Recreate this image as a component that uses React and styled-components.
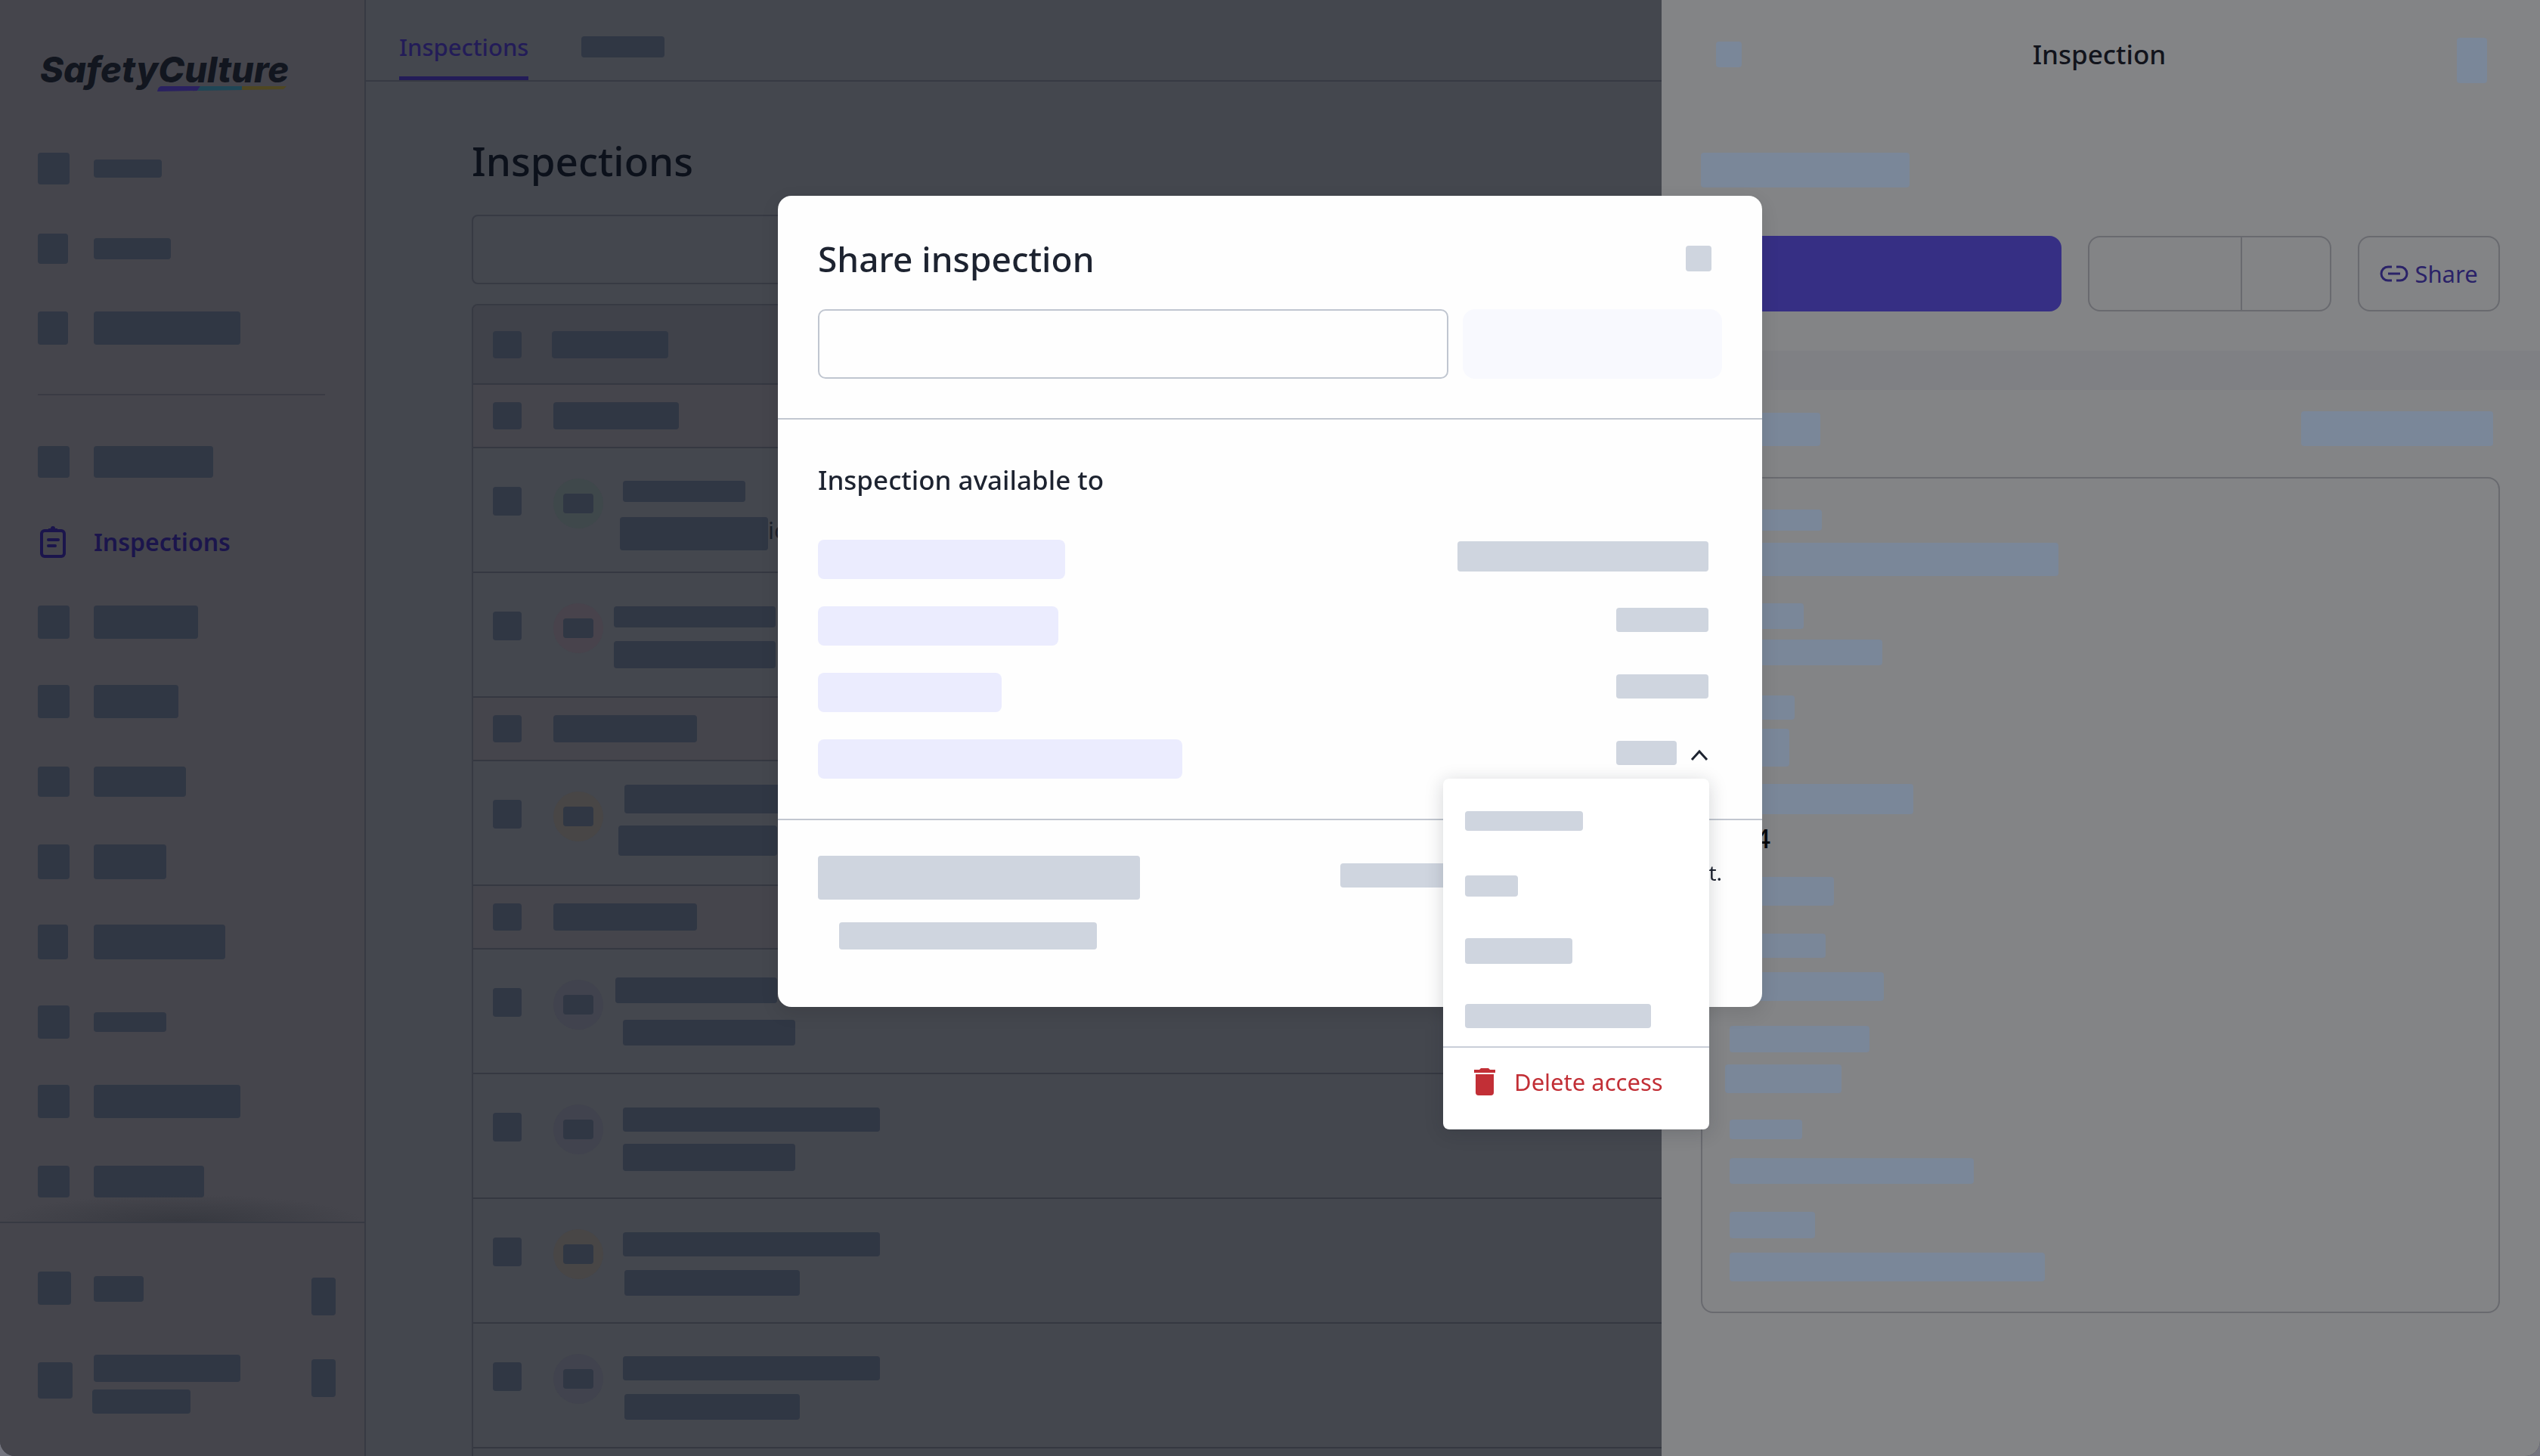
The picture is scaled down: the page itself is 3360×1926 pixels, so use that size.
import React, { useState } from 'react';
import styled, { createGlobalStyle } from 'styled-components';

const GlobalStyle = createGlobalStyle`
  * {
    box-sizing: border-box;
  }

  body {
    margin: 0;
    background: #74757f;
    font-family: 'Noto Sans', sans-serif;
    color: #1d2330;
  }

  h1, h2, h3, p, ul {
    margin: 0;
    padding: 0;
    font-weight: 500;
  }

  ul {
    list-style: none;
  }

  button, input {
    font: inherit;
    color: inherit;
    background: none;
    border: 0;
    padding: 0;
  }
`;

const Page = styled.div`
  display: grid;
  grid-template-columns: 484px 1fr 1162px;
  height: 100vh;
  overflow: hidden;
  border-radius: 0 0 20px 20px;
  background: #44474e;
`;

const Block = styled.span`
  display: block;
  flex: none;
  width: ${props => props.w}px;
  height: ${props => props.h}px;
  margin-top: ${props => props.top || 0}px;
  margin-left: ${props => props.left || 0}px;
  border-radius: 4px;
  background: #cfd5df;
`;

const DimBlock = styled(Block)`
  background: #303744;
`;

const DrawerBlock = styled(Block)`
  background: #7a8799;
`;

/* Sidebar */
const Sidebar = styled.aside`
  display: flex;
  flex-direction: column;
  min-height: 0;
  background: #45454c;
  border-right: 2px solid #373a43;
`;

const LogoLink = styled.a`
  display: block;
  height: 170px;
  padding: 66px 0 0 52px;
`;

const LogoSvg = styled.svg`
  display: block;
  overflow: visible;
`;

const Nav = styled.nav`
  display: flex;
  flex: 1;
  flex-direction: column;
`;

const NavItem = styled.a`
  display: grid;
  flex: 1;
  grid-template-columns: 42px 1fr;
  column-gap: 32px;
  align-items: center;
  padding-left: 50px;
  color: #1b154c;
  font-size: 32px;
  line-height: 44px;
  font-weight: 600;
  text-decoration: none;
`;

const NavDivider = styled.div`
  height: 2px;
  margin: 34px 52px 35px 50px;
  background: #3a3b44;
`;

const NavShade = styled.div`
  height: 36px;
  margin-top: -36px;
  background: radial-gradient(ellipse 50% 100% at 50% 100%, #373940, transparent);
`;

const SidebarFooter = styled.div`
  display: flex;
  flex-direction: column;
  gap: 52px;
  height: 310px;
  padding: 64px 38px 0 50px;
  border-top: 2px solid #373a43;
`;

const AccountRow = styled.div`
  display: grid;
  grid-template-columns: 46px 1fr 32px;
  column-gap: 28px;
  align-items: start;
`;

const AccountLines = styled.div`
  display: flex;
  flex-direction: column;
  gap: 10px;
`;

/* Main */
const Main = styled.main`
  display: flex;
  flex-direction: column;
  min-width: 0;
  overflow: hidden;
`;

const Tabs = styled.div`
  display: flex;
  flex: none;
  gap: 70px;
  height: 108px;
  padding-left: 44px;
  border-bottom: 2px solid #373a43;
`;

const Tab = styled.a`
  height: 106px;
  padding-top: 40px;
  color: #231c58;
  font-size: 31px;
  line-height: 44px;
  font-weight: 500;
  text-decoration: none;
  border-bottom: 5px solid #231c58;
`;

const MainBody = styled.div`
  display: flex;
  flex-direction: column;
  padding: 66px 0 0 140px;
`;

const MainTitle = styled.h1`
  margin-bottom: 32px;
  color: #0c111b;
  font-size: 53px;
  line-height: 78px;
`;

const SearchBox = styled.input`
  width: calc(100% + 20px);
  height: 92px;
  margin-bottom: 26px;
  border: 2px solid #373a43;
  border-radius: 8px;
`;

const List = styled.div`
  width: calc(100% + 20px);
  border: 2px solid #373a43;
  border-radius: 8px;
  overflow: hidden;
`;

const ListHeader = styled.div`
  display: flex;
  gap: 40px;
  height: 105px;
  padding: 34px 0 0 26px;
  background: #40424a;
  border-bottom: 2px solid #353841;
`;

const ListGroup = styled.div`
  display: flex;
  gap: 42px;
  align-items: center;
  height: 84px;
  padding-left: 26px;
  background: #45454c;
  border-bottom: 2px solid #353841;
`;

const ListRow = styled.div`
  display: flex;
  height: 165px;
  padding: 40px 0 0 26px;
  border-bottom: 2px solid #353841;
`;

const Avatar = styled.div`
  display: grid;
  place-items: center;
  flex: none;
  width: 66px;
  height: 66px;
  margin-left: 42px;
  border-radius: 50%;
  background: ${props => props.color};
`;

const RowText = styled.div`
  display: flex;
  flex-direction: column;
  margin-left: 14px;
  margin-top: ${props => props.lift}px;
`;

const RowLine = styled.div`
  display: flex;
  align-items: flex-end;
  color: #1b202b;
  font-size: 31px;
  line-height: 54px;
`;

/* Drawer */
const Drawer = styled.section`
  display: flex;
  flex-direction: column;
  background: #838486;
`;

const DrawerHeader = styled.header`
  display: flex;
  justify-content: space-between;
  height: 202px;
  padding: 48px 70px 0 72px;
`;

const DrawerTitle = styled.h2`
  color: #12141c;
  font-size: 35px;
  line-height: 48px;
`;

const DrawerActions = styled.div`
  display: flex;
  gap: 35px;
  padding: 64px 53px 52px 52px;
`;

const PrimaryButton = styled.button`
  flex: 1;
  height: 100px;
  border-radius: 16px;
  background: #362f84;
`;

const SplitButton = styled.div`
  display: grid;
  grid-template-columns: 200px 1fr;
  width: 322px;
  height: 100px;
  border: 2px solid #696a6f;
  border-radius: 16px;
`;

const SplitPart = styled.button`
  & + & {
    border-left: 2px solid #696a6f;
  }
`;

const ShareButton = styled.button`
  display: flex;
  gap: 8px;
  align-items: center;
  justify-content: center;
  width: 188px;
  height: 100px;
  border: 2px solid #696a6f;
  border-radius: 16px;
  color: #2a2268;
  font-size: 31px;
  line-height: 44px;
`;

const DrawerBand = styled.div`
  height: 52px;
  background: #7f8084;
`;

const DrawerSummary = styled.div`
  display: flex;
  justify-content: space-between;
  height: 115px;
  padding: 28px 62px 0 52px;
`;

const DrawerCard = styled.div`
  height: 1106px;
  margin: 0 53px 0 52px;
  padding: 41px 36px;
  border: 2px solid #696a6f;
  border-radius: 16px;
`;

const FieldValue = styled.p`
  width: 54px;
  margin: 7px 0 26px;
  color: #06070b;
  font-size: 35px;
  line-height: 50px;
  text-align: right;
`;

/* Share dialog */
const Overlay = styled.div`
  position: fixed;
  inset: 0;
  display: flex;
  justify-content: center;
  align-items: flex-start;
  padding-top: 259px;
`;

const Dialog = styled.div`
  width: 1302px;
  border-radius: 18px;
  background: #fefefe;
  box-shadow: 0 8px 24px rgba(0, 0, 0, 0.1);
`;

const DialogTop = styled.div`
  padding: 50px 53px 52px;
  border-bottom: 2px solid #c2c7d0;
`;

const TitleRow = styled.div`
  display: flex;
  justify-content: space-between;
  padding-right: 14px;
  margin-bottom: 34px;
`;

const DialogTitle = styled.h2`
  font-size: 46px;
  line-height: 66px;
`;

const CloseButton = styled.button`
  align-self: center;
`;

const InviteRow = styled.div`
  display: flex;
  gap: 19px;
`;

const InviteInput = styled.input`
  flex: 1;
  height: 92px;
  padding: 0 24px;
  font-size: 31px;
  border: 2px solid #c0c6d0;
  border-radius: 10px;
`;

const InviteButton = styled.button`
  width: 343px;
  height: 92px;
  border-radius: 16px;
  background: #f8f9fe;
`;

const AccessSection = styled.div`
  padding: 55px 53px 53px;
  border-bottom: 2px solid #c2c7d0;
`;

const SectionTitle = styled.h3`
  margin-bottom: 54px;
  font-size: 35px;
  line-height: 50px;
`;

const AccessList = styled.ul`
  display: grid;
  gap: 36px;
`;

const AccessItem = styled.li`
  position: relative;
  display: flex;
  justify-content: space-between;
  height: 52px;
  padding-right: 18px;
`;

const Person = styled(Block)`
  border-radius: 8px;
  background: #ebecfe;
`;

const LevelButton = styled.button`
  display: flex;
  gap: 18px;
  align-items: flex-start;
  padding-top: 2px;
`;

const Menu = styled.div`
  position: absolute;
  top: 52px;
  right: 17px;
  z-index: 1;
  width: 352px;
  height: 464px;
  border-radius: 8px;
  background: #fff;
  box-shadow: 0 4px 24px rgba(20, 26, 40, 0.18);
`;

const MenuOptions = styled.div`
  height: 356px;
  padding: 13px 29px 0;
  overflow: hidden;
  border-bottom: 2px solid #c9ced8;
`;

const MenuOption = styled.button`
  display: block;
  height: 86px;
`;

const DeleteButton = styled.button`
  display: flex;
  gap: 24px;
  align-items: center;
  width: 100%;
  height: 90px;
  padding-left: 40px;
  color: #c22f36;
  font-size: 31px;
  line-height: 44px;
  font-weight: 400;
`;

const DialogFooter = styled.div`
  display: flex;
  justify-content: space-between;
  height: 247px;
  padding: 47px 53px 0;
`;

const Hint = styled.div`
  display: flex;
  justify-content: space-between;
  width: 505px;
  font-size: 28px;
  line-height: 44px;
`;

const topItems = [
  { icon: [42, 42], label: [90, 24] },
  { icon: [40, 40], label: [102, 28] },
  { icon: [40, 44], label: [194, 44] },
];

const navItems = [
  { icon: [42, 42], label: [158, 42] },
  { text: 'Inspections' },
  { icon: [42, 44], label: [138, 44] },
  { icon: [42, 44], label: [112, 44] },
  { icon: [42, 40], label: [122, 40] },
  { icon: [42, 46], label: [96, 46] },
  { icon: [40, 46], label: [174, 46] },
  { icon: [42, 44], label: [96, 26] },
  { icon: [42, 44], label: [194, 44] },
  { icon: [42, 42], label: [146, 42] },
];

// lines: [width, height, gap above, indent]
const rows = [
  { group: true, w: 166 },
  { color: '#3f484b', lift: 3, lines: [[162, 28, 0, 12], [196, 44, 20, 8]], tail: 'ic' },
  { color: '#48434c', lift: 4, lines: [[214, 28, 0, 0], [214, 36, 18, 0]] },
  { group: true, w: 190 },
  { color: '#484646', lift: -9, lines: [[214, 38, 0, 14], [210, 40, 16, 6]] },
  { group: true, w: 190 },
  { color: '#41434e', lift: -3, lines: [[214, 34, 0, 2], [228, 34, 22, 12]] },
  { color: '#41434e', lift: 4, lines: [[340, 32, 0, 12], [228, 36, 16, 12]] },
  { color: '#484646', lift: 4, lines: [[340, 32, 0, 12], [232, 34, 18, 14]] },
  { color: '#41434e', lift: 3, lines: [[340, 32, 0, 12], [232, 34, 18, 14]] },
  { color: '#41434e', lift: 3, lines: [[340, 32, 0, 12], [232, 34, 18, 14]] },
];

// [width, height, gap above, indent]
const fieldsAbove = [
  [122, 28, 0, 0],
  [435, 44, 16, 0],
  [98, 34, 36, 0],
  [202, 34, 14, 0],
  [86, 32, 40, 0],
  [79, 50, 12, 0],
  [243, 40, 23, 0],
];

const fieldsBelow = [
  [138, 38, 0, 0],
  [127, 32, 37, 0],
  [204, 38, 19, 0],
  [185, 35, 33, 0],
  [154, 38, 16, -6],
  [96, 26, 35, 0],
  [323, 34, 25, 0],
  [113, 35, 37, 0],
  [417, 38, 19, 0],
];

const people = [
  { name: 327, level: [332, 40] },
  { name: 318, level: [122, 32] },
  { name: 243, level: [122, 32] },
  { name: 482, level: [80, 32], menu: true },
];

const menuOptions = [
  [156, 26],
  [70, 28],
  [142, 34],
  [246, 32],
];

const Logo = () => (
  <LogoSvg width="336" height="60" viewBox="0 0 336 60" role="img" aria-label="SafetyCulture">
    <text
      x="1"
      y="43"
      fill="#12161f"
      fontFamily="Inter, sans-serif"
      fontSize="47"
      fontStyle="italic"
      fontWeight="800"
    >
      SafetyCulture
    </text>
    <path d="M161 48h52l-4 6-53 1q1-6 5-7z" fill="#2a2160" />
    <path d="M213 48h55v5l-59 1z" fill="#1f4656" />
    <path d="M268 48h59l-4 4-55 1z" fill="#4f4722" />
  </LogoSvg>
);

const ClipboardIcon = () => (
  <svg
    width="42"
    height="48"
    viewBox="0 0 42 48"
    fill="none"
    stroke="currentColor"
    strokeWidth="4"
    strokeLinecap="round"
  >
    <rect x="5" y="9" width="30" height="34" rx="4" />
    <path d="M14 21h13M14 29h9" />
    <path d="M14 9V6h3a3 3 0 0 1 6 0h3v3z" fill="currentColor" stroke="none" />
  </svg>
);

const LinkIcon = () => (
  <svg width="38" height="22" viewBox="0 0 38 22" fill="none" stroke="currentColor" strokeWidth="3">
    <path d="M16 2h-5a9 9 0 0 0 0 18h5M22 2h5a9 9 0 0 1 0 18h-5M11 11h16" />
  </svg>
);

const ChevronUp = () => (
  <svg width="24" height="32" viewBox="0 0 24 32" fill="none" stroke="#1d2330" strokeWidth="3">
    <path d="M2 25l10-11 10 11" />
  </svg>
);

const TrashIcon = () => (
  <svg width="30" height="36" viewBox="0 0 30 36" fill="currentColor">
    <path d="M10 0h10l2 2h7v4H1V2h7z" />
    <path d="M3 8h24v24a4 4 0 0 1-4 4H7a4 4 0 0 1-4-4z" />
  </svg>
);

const NavRow = ({ item }) => (
  <NavItem href="#" aria-current={item.text ? 'page' : undefined}>
    {item.text ? (
      <>
        <ClipboardIcon />
        {item.text}
      </>
    ) : (
      <>
        <DimBlock w={item.icon[0]} h={item.icon[1]} />
        <DimBlock w={item.label[0]} h={item.label[1]} />
      </>
    )}
  </NavItem>
);

const InspectionRow = ({ row }) => {
  if (row.group) {
    return (
      <ListGroup>
        <DimBlock w={38} h={36} />
        <DimBlock w={row.w} h={36} />
      </ListGroup>
    );
  }

  return (
    <ListRow>
      <DimBlock w={38} h={38} top={11} />
      <Avatar color={row.color}>
        <DimBlock w={40} h={26} />
      </Avatar>
      <RowText lift={row.lift}>
        {row.lines.map(([w, h, top, left], index) => (
          <RowLine key={index}>
            <DimBlock w={w} h={h} top={top} left={left} />
            {index === 1 && row.tail}
          </RowLine>
        ))}
      </RowText>
    </ListRow>
  );
};

const ShareDialog = () => {
  const [email, setEmail] = useState('');

  return (
    <Overlay>
      <Dialog role="dialog" aria-labelledby="share-title">
        <DialogTop>
          <TitleRow>
            <DialogTitle id="share-title">Share inspection</DialogTitle>
            <CloseButton aria-label="Close">
              <Block w={34} h={34} />
            </CloseButton>
          </TitleRow>
          <InviteRow>
            <InviteInput aria-label="Add people" value={email} onChange={e => setEmail(e.target.value)} />
            <InviteButton aria-label="Invite" />
          </InviteRow>
        </DialogTop>

        <AccessSection>
          <SectionTitle>Inspection available to</SectionTitle>
          <AccessList>
            {people.map((person, index) => (
              <AccessItem key={index}>
                <Person w={person.name} h={52} />
                <LevelButton aria-label="Access level">
                  <Block w={person.level[0]} h={person.level[1]} />
                  {person.menu && <ChevronUp />}
                </LevelButton>
                {person.menu && (
                  <Menu>
                    <MenuOptions>
                      {menuOptions.map(([w, h]) => (
                        <MenuOption key={w} aria-label="Access option">
                          <Block w={w} h={h} />
                        </MenuOption>
                      ))}
                    </MenuOptions>
                    <DeleteButton>
                      <TrashIcon />
                      Delete access
                    </DeleteButton>
                  </Menu>
                )}
              </AccessItem>
            ))}
          </AccessList>
        </AccessSection>

        <DialogFooter>
          <div>
            <Block w={426} h={58} />
            <Block w={341} h={36} top={30} left={28} />
          </div>
          <Hint>
            <Block w={140} h={32} top={10} />
            t.
          </Hint>
        </DialogFooter>
      </Dialog>
    </Overlay>
  );
};

const App = () => {
  return (
    <>
      <GlobalStyle />
      <Page>
        <Sidebar>
          <LogoLink href="#">
            <Logo />
          </LogoLink>
          <Nav>
            {topItems.map((item, index) => (
              <NavRow key={index} item={item} />
            ))}
            <NavDivider />
            {navItems.map((item, index) => (
              <NavRow key={index} item={item} />
            ))}
          </Nav>
          <NavShade />
          <SidebarFooter>
            <AccountRow>
              <DimBlock w={44} h={44} />
              <DimBlock w={66} h={34} top={6} />
              <DimBlock w={32} h={50} top={8} />
            </AccountRow>
            <AccountRow>
              <DimBlock w={46} h={48} top={10} />
              <AccountLines>
                <DimBlock w={194} h={36} />
                <DimBlock w={130} h={32} left={-2} />
              </AccountLines>
              <DimBlock w={32} h={50} top={6} />
            </AccountRow>
          </SidebarFooter>
        </Sidebar>

        <Main>
          <Tabs>
            <Tab href="#">Inspections</Tab>
            <DimBlock w={110} h={28} top={48} />
          </Tabs>
          <MainBody>
            <MainTitle>Inspections</MainTitle>
            <SearchBox aria-label="Search inspections" />
            <List>
              <ListHeader>
                <DimBlock w={38} h={36} />
                <DimBlock w={154} h={36} />
              </ListHeader>
              {rows.map((row, index) => (
                <InspectionRow key={index} row={row} />
              ))}
            </List>
          </MainBody>
        </Main>

        <Drawer>
          <DrawerHeader>
            <DrawerBlock w={34} h={34} top={7} />
            <DrawerTitle>Inspection</DrawerTitle>
            <DrawerBlock w={40} h={60} top={2} />
          </DrawerHeader>
          <DrawerBlock w={276} h={46} left={52} />
          <DrawerActions>
            <PrimaryButton aria-label="Open report" />
            <SplitButton>
              <SplitPart aria-label="Download" />
              <SplitPart aria-label="More formats" />
            </SplitButton>
            <ShareButton>
              <LinkIcon />
              Share
            </ShareButton>
          </DrawerActions>
          <DrawerBand />
          <DrawerSummary>
            <DrawerBlock w={158} h={44} top={2} />
            <DrawerBlock w={254} h={46} />
          </DrawerSummary>
          <DrawerCard>
            {fieldsAbove.map(([w, h, top, left], index) => (
              <DrawerBlock key={index} w={w} h={h} top={top} left={left} />
            ))}
            <FieldValue>4</FieldValue>
            {fieldsBelow.map(([w, h, top, left], index) => (
              <DrawerBlock key={index} w={w} h={h} top={top} left={left} />
            ))}
          </DrawerCard>
        </Drawer>
      </Page>
      <ShareDialog />
    </>
  );
};

export default App;
